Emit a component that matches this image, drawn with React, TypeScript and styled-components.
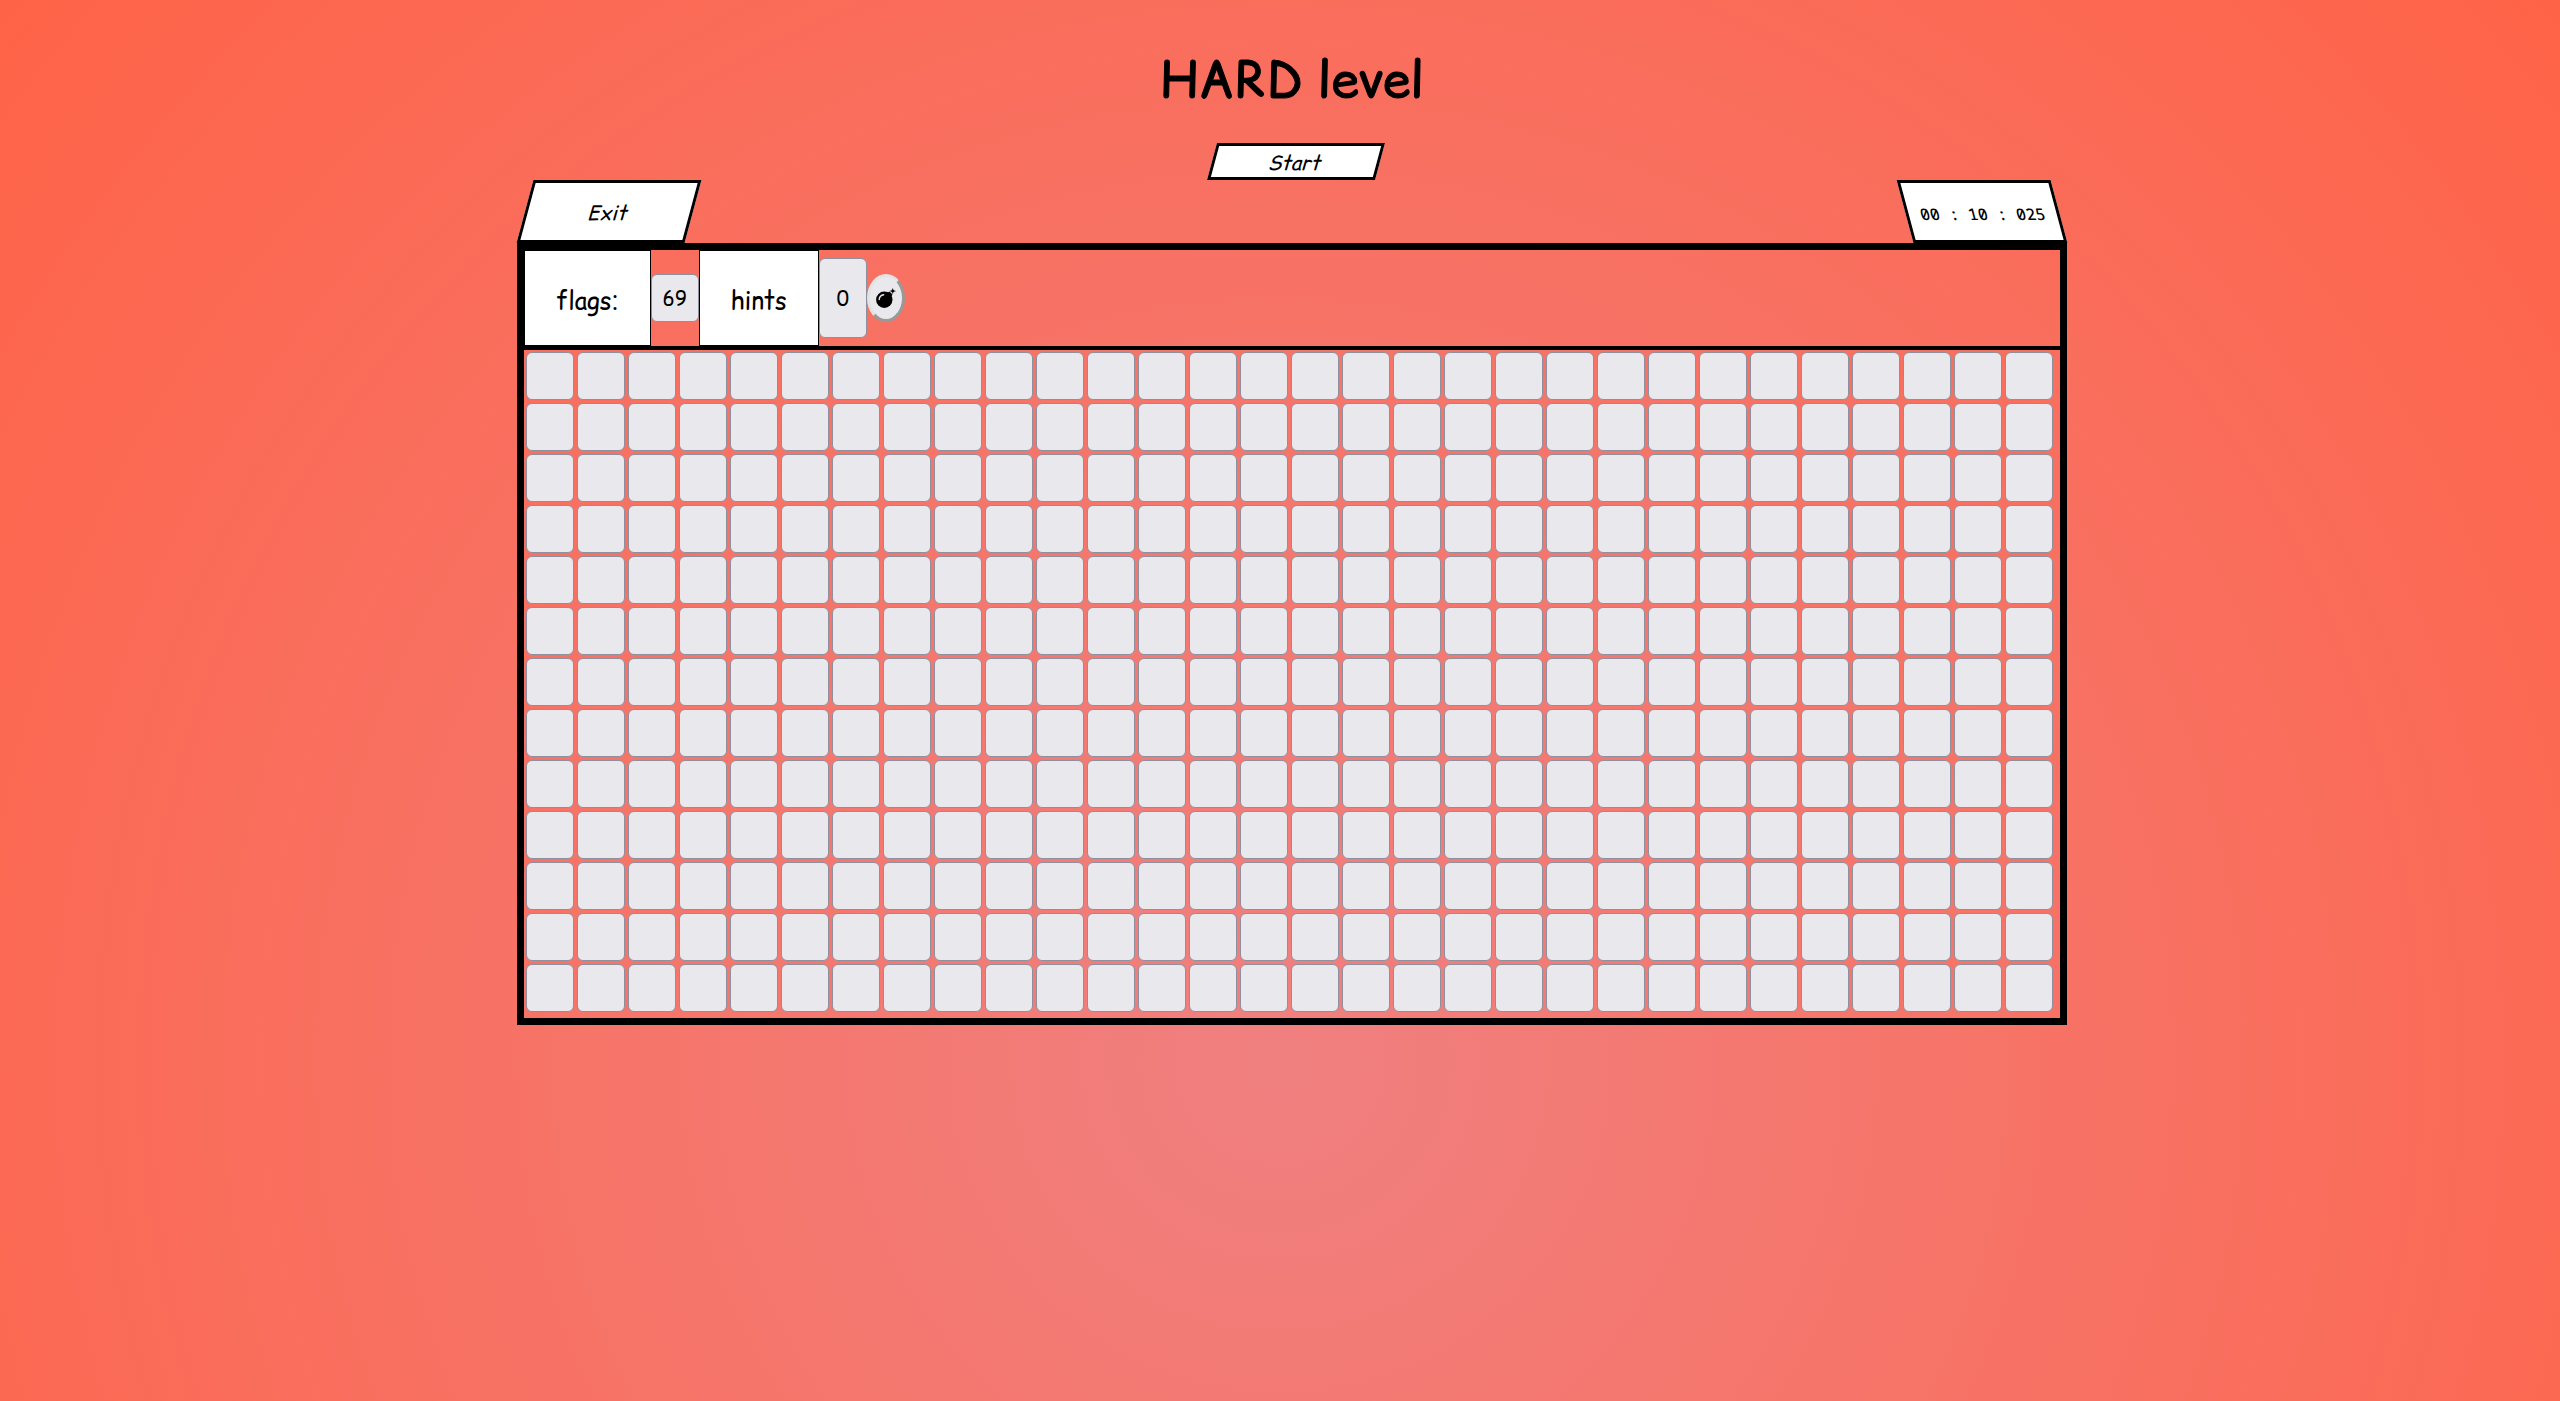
import React from "react";
import styled, { createGlobalStyle } from "styled-components";

const comic = `"Comic Relief", "Comic Sans MS", "Comic Neue", cursive`;

const GlobalStyle = createGlobalStyle`
  *, *::before, *::after { box-sizing: border-box; }
  body {
    margin: 0;
    min-height: 100vh;
    overflow: hidden;
    font-family: ${comic};
    color: #000;
    background: radial-gradient(circle at 50% 1062px, lightcoral, tomato 1663px);
  }
`;

const Page = styled.main`
  min-height: 100vh;
  padding: 40px 0 0 24px;
  display: flex;
  flex-direction: column;
  align-items: center;
`;

const Title = styled.h1`
  margin: 0;
  height: 103px;
  line-height: 78px;
  font-size: 50px;
  font-weight: 400;
  -webkit-text-stroke: 1px #000;
`;

const SlantButton = styled.button<{ $height: number }>`
  width: 168px;
  height: ${(p) => p.$height}px;
  padding: 2px 0 0;
  border: 3px solid #000;
  background: #fff;
  color: #000;
  font-family: inherit;
  font-size: 20px;
  transform: skewX(-15deg);
`;

const StartRow = styled.div`
  padding-left: 8px;
`;

const Game = styled.section`
  width: calc(60vw + 14px);
`;

const Tabs = styled.header`
  display: flex;
  justify-content: space-between;
  padding: 0 8px;
`;

const Timer = styled.output`
  width: 154px;
  height: 63px;
  padding-top: 4px;
  display: flex;
  align-items: center;
  justify-content: center;
  border: 3px solid #000;
  background: #fff;
  font-family: "Noto Sans Mono", monospace;
  font-size: 16px;
  font-weight: 500;
  white-space: pre;
  transform: skewX(15deg);
`;

const Board = styled.div`
  border: 7px solid #000;
`;

const Hud = styled.div`
  height: 100px;
  display: flex;
  align-items: center;
  border-bottom: 4px solid #000;
`;

const HudLabel = styled.div`
  align-self: stretch;
  display: flex;
  align-items: center;
  padding: 4px 31px 0;
  border: 1px solid #000;
  background: #fff;
  font-size: 24px;
`;

const Tile = styled.button<{ $tall?: boolean }>`
  width: 48px;
  height: ${(p) => (p.$tall ? 80 : 48)}px;
  padding: 2px 0 0;
  border: 1px solid #8f8f9d;
  border-radius: 6px;
  background: #e9e9ed;
  color: #000;
  font-family: inherit;
  font-size: 20px;
`;

const BombButton = styled.button`
  width: 38px;
  height: 48px;
  padding: 0;
  display: grid;
  place-items: center;
  border: 3px solid;
  border-color: #e3e3e3 #999 #999 #e3e3e3;
  border-radius: 50%;
  background: #e9e9ed;
`;

const Field = styled.div`
  display: grid;
  grid-template-columns: repeat(30, 48px);
  gap: 3px;
  padding: 2px 2px 6px;
`;

const BombIcon = () => (
  <svg width="20" height="20" viewBox="0 0 20 20" aria-hidden="true">
    <circle cx="8.300" cy="11.700" r="8.200" fill="#000" />
    <path d="M11 5l2.500-1.500 3 3L15 9z" fill="#000" />
    <path d="M3.200 11.500a5.300 5.300 0 0 1 4.500-4.800" fill="none" stroke="#e9e9ed" strokeWidth="1.400" strokeLinecap="round" />
    <path d="M16.700 -.3l1 2.400 2.400 1-2.400 1-1 2.400-1-2.400-2.400-1 2.400-1z" fill="#000" stroke="#e9e9ed" strokeWidth=".4" />
  </svg>
);

const cells = Array.from({ length: 13 * 30 }, (_, i) => i);

export default function App() {
  return (
    <>
      <GlobalStyle />
      <Page>
        <Title>HARD level</Title>
        <StartRow>
          <SlantButton $height={37}>Start</SlantButton>
        </StartRow>
        <Game>
          <Tabs>
            <SlantButton $height={63}>Exit</SlantButton>
            <Timer>00 : 10 : 025</Timer>
          </Tabs>
          <Board>
            <Hud>
              <HudLabel>flags:</HudLabel>
              <Tile>69</Tile>
              <HudLabel>hints</HudLabel>
              <Tile $tall>0</Tile>
              <BombButton aria-label="Use a hint">
                <BombIcon />
              </BombButton>
            </Hud>
            <Field>
              {cells.map((i) => (
                <Tile key={i} aria-label={`Row ${Math.floor(i / 30) + 1}, column ${(i % 30) + 1}`} />
              ))}
            </Field>
          </Board>
        </Game>
      </Page>
    </>
  );
}
